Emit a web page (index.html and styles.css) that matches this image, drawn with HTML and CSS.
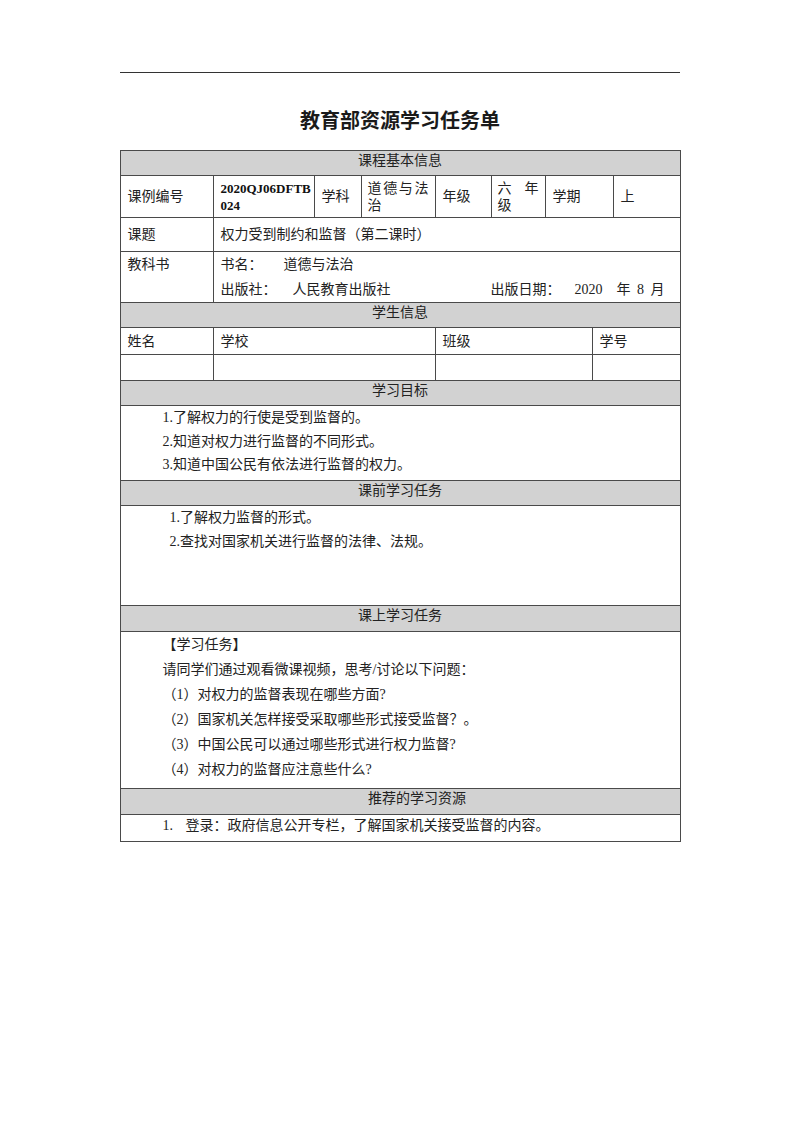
FILE: index.html
```html
<!DOCTYPE html>
<html lang="zh-CN">
<head>
<meta charset="utf-8">
<title>教育部资源学习任务单</title>
<link rel="stylesheet" href="styles.css">
</head>
<body>
<div class="page">
  <div class="rule"></div>
  <h1 class="title">教育部资源学习任务单</h1>
  <table class="sheet">
    <colgroup>
      <col class="c1"><col class="c2"><col class="c3"><col class="c4"><col class="c5"><col class="c6"><col class="c7"><col class="c8"><col class="c9">
    </colgroup>
    <tr class="h-head"><td class="head" colspan="9">课程基本信息</td></tr>
    <tr class="h-r1">
      <td>课例编号</td>
      <td class="code">2020QJ06DFTB<br>024</td>
      <td>学科</td>
      <td class="just">道德与法治</td>
      <td>年级</td>
      <td class="just">六年级</td>
      <td colspan="2">学期</td>
      <td>上</td>
    </tr>
    <tr class="h-r2">
      <td>课题</td>
      <td colspan="8">权力受到制约和监督（第二课时）</td>
    </tr>
    <tr class="h-r3">
      <td class="top lh25">教科书</td>
      <td colspan="8" class="top lh25">
        <div class="bline"><span class="lbl1">书名：</span><span>道德与法治</span></div>
        <div class="bline"><span class="lbl2">出版社：</span><span class="pub">人民教育出版社</span><span class="date">出版日期：</span><span class="yr">2020</span><span>年</span><span class="mo">8</span><span>月</span></div>
      </td>
    </tr>
    <tr class="h-head"><td class="head" colspan="9">学生信息</td></tr>
    <tr class="h-names">
      <td>姓名</td>
      <td colspan="3">学校</td>
      <td colspan="3">班级</td>
      <td colspan="2">学号</td>
    </tr>
    <tr class="h-empty">
      <td></td>
      <td colspan="3"></td>
      <td colspan="3"></td>
      <td colspan="2"></td>
    </tr>
    <tr class="h-head"><td class="head" colspan="9">学习目标</td></tr>
    <tr class="h-goals">
      <td colspan="9" class="top goals">
        <div>1.了解权力的行使是受到监督的。</div>
        <div>2.知道对权力进行监督的不同形式。</div>
        <div>3.知道中国公民有依法进行监督的权力。</div>
      </td>
    </tr>
    <tr class="h-head"><td class="head" colspan="9">课前学习任务</td></tr>
    <tr class="h-pre">
      <td colspan="9" class="top pre">
        <div>1.了解权力监督的形式。</div>
        <div>2.查找对国家机关进行监督的法律、法规。</div>
      </td>
    </tr>
    <tr class="h-head2"><td class="head" colspan="9">课上学习任务</td></tr>
    <tr class="h-class">
      <td colspan="9" class="top cls">
        <div>【学习任务】</div>
        <div>请同学们通过观看微课视频，思考/讨论以下问题：</div>
        <div>（1）对权力的监督表现在哪些方面?</div>
        <div>（2）国家机关怎样接受采取哪些形式接受监督？。</div>
        <div>（3）中国公民可以通过哪些形式进行权力监督?</div>
        <div>（4）对权力的监督应注意些什么?</div>
      </td>
    </tr>
    <tr class="h-head2"><td class="head head-off" colspan="9">推荐的学习资源</td></tr>
    <tr class="h-res">
      <td colspan="9" class="top res"><span class="num">1.</span>登录：政府信息公开专栏，了解国家机关接受监督的内容。</td>
    </tr>
  </table>
</div>
</body>
</html>
```

FILE: styles.css
```css
html, body {
  margin: 0;
  padding: 0;
  background: #ffffff;
}

body {
  color: #222222;
  font-family: "Liberation Serif", "Noto Sans CJK SC", serif;
  font-size: 14px;
}

.page {
  width: 560px;
  margin: 0 auto;
  padding-top: 72px;
}

.rule {
  border-top: 1px solid #333333;
}

.title {
  margin: 35px 0 0;
  font-family: "Noto Sans CJK SC", sans-serif;
  font-size: 20px;
  font-weight: 700;
  line-height: 24px;
  text-align: center;
  color: #1a1a1a;
}

.sheet {
  margin-top: 18px;
  width: 561px;
  margin-left: -0.5px;
  border-collapse: collapse;
  table-layout: fixed;
}

.c1 { width: 93px; }
.c2 { width: 101px; }
.c3 { width: 47px; }
.c4 { width: 74px; }
.c5 { width: 56px; }
.c6 { width: 54px; }
.c7 { width: 47px; }
.c8 { width: 21px; }
.c9 { width: 67px; }

.sheet td {
  border: 1px solid #4a4a4a;
  padding: 0 7px;
  line-height: 17px;
  vertical-align: middle;
  text-align: left;
  overflow: hidden;
}

.sheet td.head {
  background: #d2d2d2;
  text-align: center;
  vertical-align: top;
  line-height: 20px;
  padding: 0;
}

.sheet td.head-off {
  padding-left: 34px;
}

.sheet td.top {
  vertical-align: top;
}

.h-head { height: 25px; }
.h-head2 { height: 26px; }
.h-r1 { height: 42px; }
.h-r2 { height: 34px; }
.h-r3 { height: 51px; }
.h-names { height: 27px; }
.h-empty { height: 26px; }
.h-goals { height: 75px; }
.h-pre { height: 100px; }
.h-class { height: 157px; }
.h-res { height: 27px; }

.sheet td.code {
  font-weight: 700;
  font-size: 13px;
  line-height: 17px;
  white-space: nowrap;
  color: #111111;
}

.sheet td.just {
  text-align: justify;
  text-align-last: left;
  padding: 0 6px;
}

.sheet td.lh25 {
  line-height: 25px;
  padding-top: 0;
}

.bline {
  display: flex;
  white-space: nowrap;
}

.lbl1 { width: 63px; }
.lbl2 { width: 72px; }
.pub { width: 198px; }
.date { width: 84px; }
.yr { width: 42px; }
.mo { width: 20px; text-align: center; }

.sheet td.goals {
  padding: 0 0 0 42px;
  line-height: 23.5px;
}

.sheet td.pre {
  padding: 0 0 0 49px;
  line-height: 24px;
}

.sheet td.cls {
  padding: 0 0 0 42px;
  line-height: 25px;
}

.sheet td.res {
  padding: 0 0 0 42px;
  line-height: 22px;
}

.num {
  display: inline-block;
  width: 23px;
}
```
